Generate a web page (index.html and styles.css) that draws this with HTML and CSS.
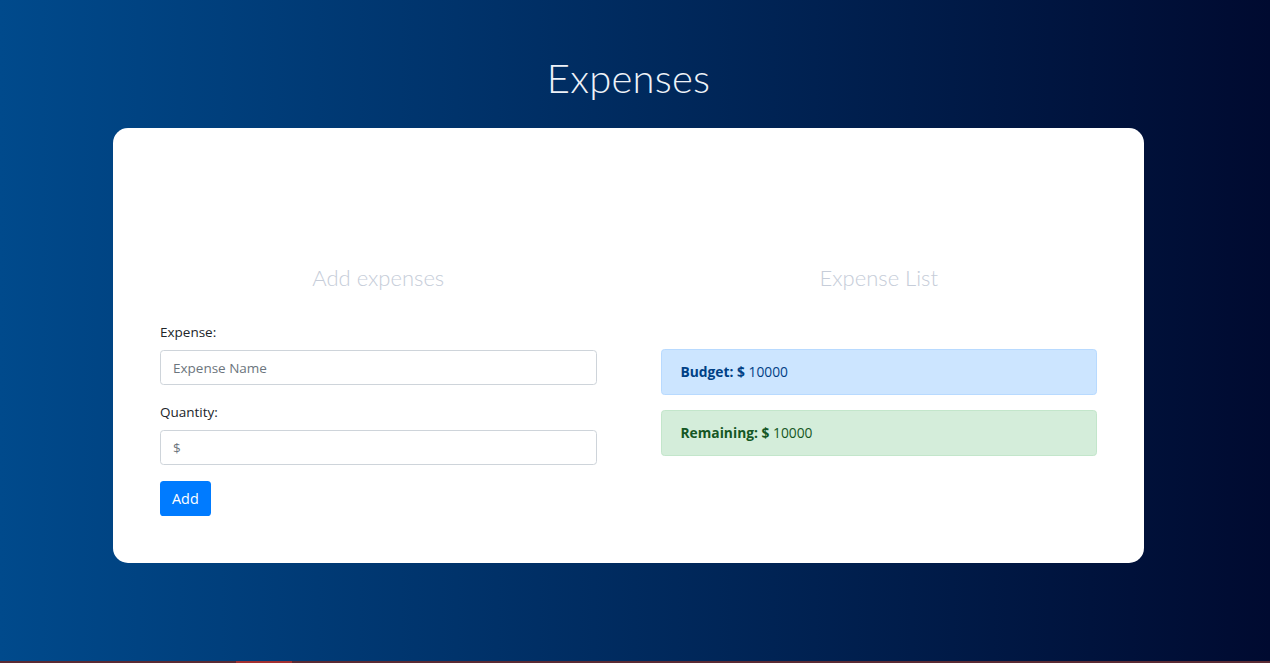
FILE: index.html
```html
<!DOCTYPE html>
<html lang="en">
<head>
<meta charset="utf-8">
<title>Expenses</title>
<link rel="stylesheet" href="styles.css">
</head>
<body>
<div class="page">
  <h1 class="title">Expenses</h1>
  <main class="card">
    <section class="col">
      <h2 class="col-title">Add expenses</h2>
      <form class="form">
        <label class="label" for="exp">Expense:</label>
        <input class="input" id="exp" type="text" placeholder="Expense Name">
        <label class="label" for="qty">Quantity:</label>
        <input class="input" id="qty" type="text" placeholder="$">
        <button class="btn" type="button">Add</button>
      </form>
    </section>
    <section class="col">
      <h2 class="col-title">Expense List</h2>
      <div class="alerts">
        <div class="alert alert-budget"><strong>Budget: $</strong> 10000</div>
        <div class="alert alert-remaining"><strong>Remaining: $</strong> 10000</div>
      </div>
    </section>
  </main>
</div>
<div class="bottom-bar"><span class="bottom-thumb"></span></div>
</body>
</html>
```
FILE: styles.css
```css
html, body {
  margin: 0;
  padding: 0;
}
body {
  height: 663px;
  overflow: hidden;
  background: linear-gradient(to right, #004a8c 0%, #002a5e 50%, #000a30 100%);
  font-family: "Open Sans", "Noto Sans", sans-serif;
  font-size: 13.5px;
  line-height: 1.5;
  color: #212529;
  display: flex;
  flex-direction: column;
}
.page {
  flex: 1;
  display: flex;
  flex-direction: column;
  align-items: center;
  padding-right: 13px;
}
.title {
  margin: 52px 0 24px;
  font-family: "Lato", sans-serif;
  font-weight: 300;
  font-size: 40px;
  line-height: 52px;
  color: #eef2f8;
  letter-spacing: 0.2px;
}
.card {
  width: 1031px;
  box-sizing: border-box;
  background: #fff;
  border-radius: 15px;
  padding: 135px 47px 47px;
  display: grid;
  grid-template-columns: 1fr 1fr;
  column-gap: 64px;
}
.col-title {
  margin: 0 0 28px;
  text-align: center;
  font-family: "Lato", sans-serif;
  font-weight: 300;
  font-size: 22px;
  line-height: 30px;
  color: #c6cdd9;
}
.form {
  display: flex;
  flex-direction: column;
  align-items: flex-start;
}
.label {
  margin-bottom: 7px;
  line-height: 22px;
}
.input {
  width: 100%;
  box-sizing: border-box;
  height: 35px;
  padding: 0 12px;
  border: 1px solid #ced4da;
  border-radius: 3.6px;
  font: inherit;
  color: #495057;
  margin-bottom: 16px;
}
.input::placeholder {
  color: #6c757d;
}
.btn {
  height: 35px;
  padding: 0 12px;
  border: 0;
  border-radius: 3.6px;
  background: #007bff;
  color: #fff;
  font: inherit;
  font-size: 14.4px;
}
.alerts {
  margin-top: 56px;
  display: flex;
  flex-direction: column;
  gap: 15px;
}
.alert {
  height: 46px;
  box-sizing: border-box;
  display: flex;
  align-items: center;
  padding: 0 19px;
  border: 1px solid;
  border-radius: 3.6px;
  white-space: pre;
  font-size: 13.8px;
}
.alert strong {
  font-weight: 700;
}
.alert-budget {
  background: #cce5ff;
  border-color: #b8daff;
  color: #004085;
}
.alert-remaining {
  background: #d4edda;
  border-color: #c3e6cb;
  color: #155724;
}
.bottom-bar {
  height: 2px;
  background: #5a2a33;
  position: relative;
}
.bottom-thumb {
  position: absolute;
  left: 236px;
  width: 56px;
  top: 0;
  height: 2px;
  background: #a33030;
}
```
